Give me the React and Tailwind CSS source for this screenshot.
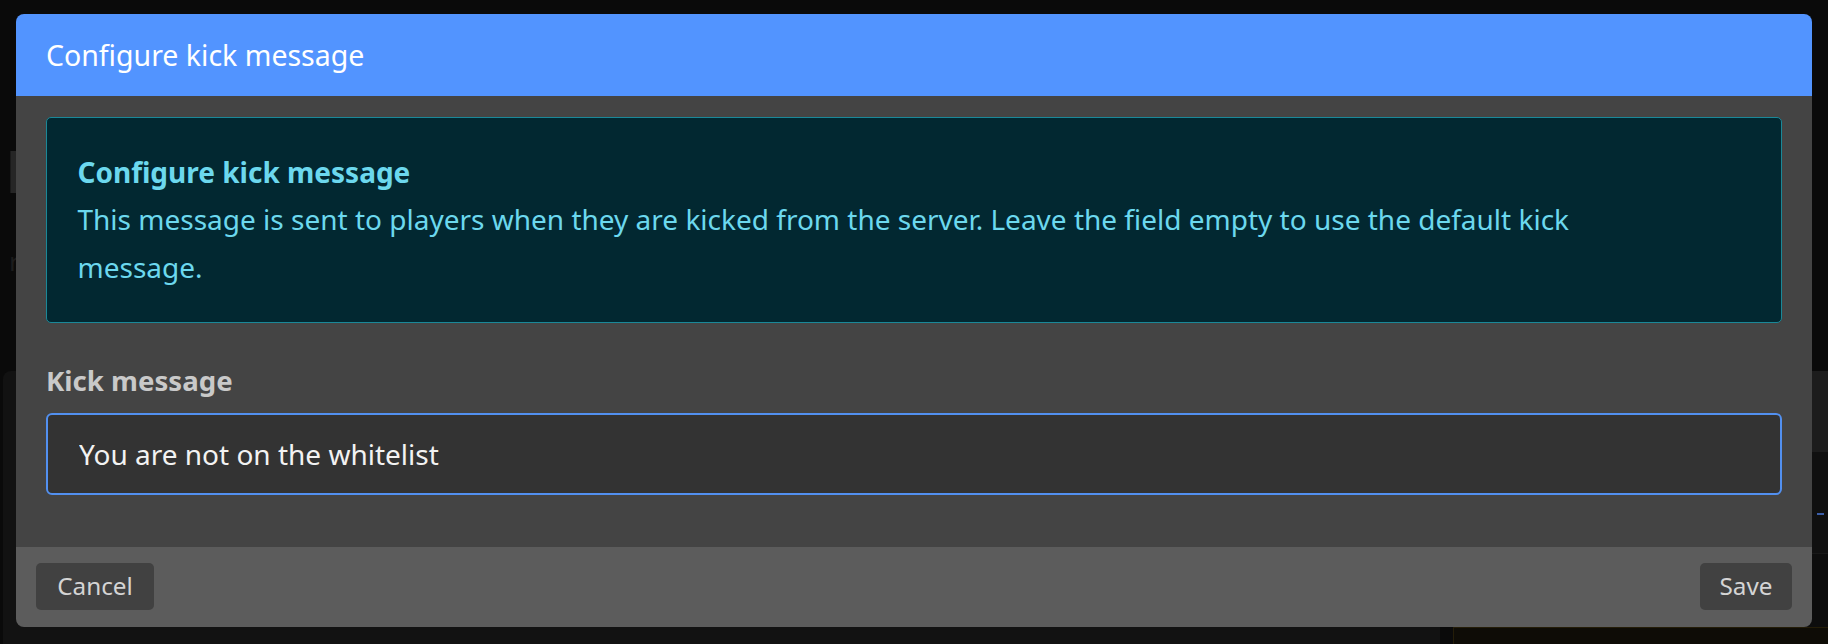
export default function App() {
  return (
    <div className="relative h-[644px] w-full overflow-hidden bg-[#0a0a0a] font-['Noto_Sans','Open_Sans',sans-serif]">
      {/* page behind the dialog */}
      <div className="flex h-full flex-col pl-[3px]">
        <div className="h-[140px]" />
        <h1 className="pl-[2px] text-[60px] font-bold leading-[60px] text-[#262626]">E</h1>
        <p className="mt-[46px] pl-[6px] text-[26px] leading-[30px] text-[#1c1c1c]">r</p>
        <div className="mt-auto flex h-[273px] gap-[13px]">
          <div className="flex-1 rounded-tl-[8px] bg-[#121212]" />
          <div className="flex w-[375px] flex-col">
            <div className="h-[81px] bg-[#1c1c1c]" />
            <div className="flex h-[101px] items-end bg-[#101010] pb-[38px] pl-[364px]">
              <div className="h-[2px] w-[7px] bg-[#3b5ea8]" />
            </div>
            <div className="h-[74px] border-t border-[#181818] bg-[#0d0d0d]" />
            <div className="flex-1 border-l border-t border-[#241d08] bg-[#0e0c06]" />
          </div>
        </div>
      </div>

      {/* dialog */}
      <div className="absolute inset-0 pl-[16px] pr-[16px] pt-[14px]">
        <div className="flex flex-col overflow-hidden rounded-[8px]">
          <div className="flex h-[82px] items-center bg-[#5294ff] px-[30px]">
            <h5 className="text-[28.5px] leading-[34px] text-white">Configure kick message</h5>
          </div>
          <div className="bg-[#444444] px-[30px] pb-[52px] pt-[21px]">
            <div className="rounded-[5px] border-[1.5px] border-[#1a8898] bg-[#022831] py-[30.5px] pl-[30.5px] pr-[90px] leading-[47.5px] text-[#6cd8ee]">
              <div className="text-[28px] font-bold">Configure kick message</div>
              <div className="text-[28px]">
                This message is sent to players when they are kicked from the server. Leave the field empty to use the default kick message.
              </div>
            </div>
            <label className="mb-[12px] mt-[36px] block text-[27.6px] font-bold leading-[42px] text-[#c9c9c9]">
              Kick message
            </label>
            <input
              readOnly
              defaultValue="You are not on the whitelist"
              className="block h-[82px] w-full rounded-[6px] border-2 border-[#5290f0] bg-[#333333] pl-[31px] text-[28px] text-[#f2f2f2] outline-none"
            />
          </div>
          <div className="flex h-[80px] items-center justify-between bg-[#5c5c5c] px-[20px]">
            <button className="flex h-[47px] w-[118px] items-center justify-center rounded-[5px] bg-[#414141] text-[24.3px] text-[#d4d4d4]">
              Cancel
            </button>
            <button className="flex h-[47px] w-[92px] items-center justify-center rounded-[5px] bg-[#414141] text-[24.3px] text-[#d4d4d4]">
              Save
            </button>
          </div>
        </div>
      </div>
    </div>
  );
}
